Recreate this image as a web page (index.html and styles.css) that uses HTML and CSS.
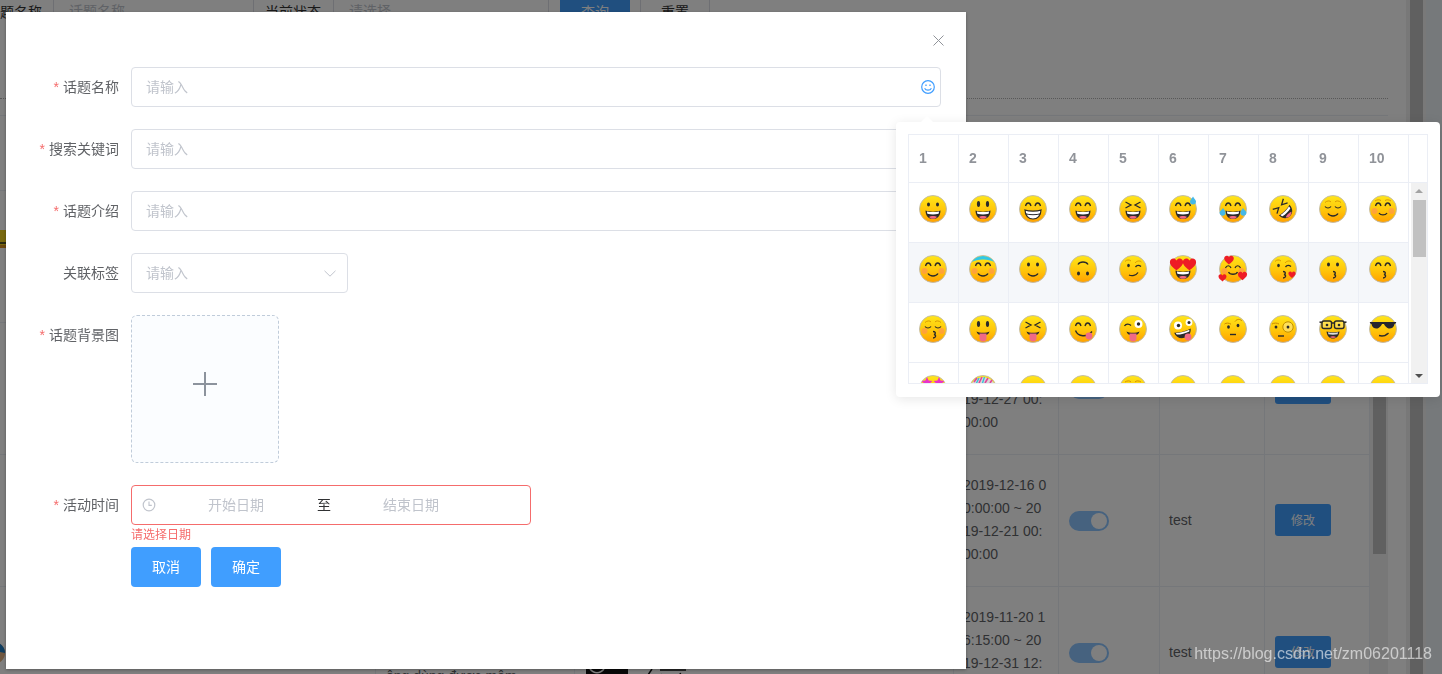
FILE: index.html
```html
<!DOCTYPE html>
<html lang="zh">
<head>
    <meta charset="UTF-8">
    <title>话题管理</title>
    <link rel="stylesheet" href="styles.css">
</head>
<body>
    <!-- shared emoji parts -->
    <svg class="svg-defs" aria-hidden="true">
        <defs>
            <linearGradient id="face-fill" x1="0" y1="0" x2="0" y2="1">
                <stop offset="0" stop-color="#ffe619"/>
                <stop offset="0.55" stop-color="#ffc60a"/>
                <stop offset="1" stop-color="#ffa000"/>
            </linearGradient>
            <circle id="face" cx="14" cy="14" r="13.5" fill="url(#face-fill)" stroke="#bdb9ad" stroke-width="0.9"/>
            <g id="mouth-open">
                <path d="M6.5 15.5C10 17 18 17 21.5 15.5 21.5 20.5 18.5 24 14 24S6.5 20.5 6.5 15.5Z" fill="#2a2a2a"/>
                <path d="M8 16.4C11 17.2 17 17.2 20 16.4 20 17.6 19.8 18.2 19.5 18.8 16 19.6 12 19.6 8.5 18.8 8.2 18.2 8 17.6 8 16.4Z" fill="#fff"/>
                <path d="M10 22C11.5 20.8 16.5 20.8 18 22 16.8 23.4 15.5 23.8 14 23.8S11.2 23.4 10 22Z" fill="#f06a85"/>
            </g>
            <g id="mouth-grin">
                <path d="M6 15C10 16.6 18 16.6 22 15 22 20.5 18.5 24 14 24S6 20.5 6 15Z" fill="#fff" stroke="#2a2a2a" stroke-width="1.2"/>
                <path d="M6.6 18.8C10 20 18 20 21.4 18.8" fill="none" stroke="#2a2a2a" stroke-width="1"/>
            </g>
            <g id="eyes-dot" fill="#2a2a2a">
                <ellipse cx="9.5" cy="9.5" rx="1.5" ry="2"/>
                <ellipse cx="18.5" cy="9.5" rx="1.5" ry="2"/>
            </g>
            <g id="eyes-tall" fill="#2a2a2a">
                <ellipse cx="9.5" cy="9" rx="1.6" ry="3"/>
                <ellipse cx="18.5" cy="9" rx="1.6" ry="3"/>
            </g>
            <path id="eyes-arc" d="M6.5 11C7.5 7 11 7 12 11M16 11C17 7 20.5 7 21.5 11" fill="none" stroke="#2a2a2a" stroke-width="1.3"/>
            <path id="eyes-x" d="M6.5 7L12 10 6.5 13M21.5 7L16 10 21.5 13" fill="none" stroke="#2a2a2a" stroke-width="1.3"/>
            <g id="eyes-closed" fill="none">
                <path d="M6 11.5C7.5 13.5 10.5 13.5 12 11.5M16 11.5C17.5 13.5 20.5 13.5 22 11.5" stroke="#2a2a2a" stroke-width="1.2"/>
                <path d="M6 7.5C8 5.5 11 5.5 12 7M16 7C17 5.5 20 5.5 22 7.5" stroke="#d08a00" stroke-width="0.8"/>
            </g>
            <path id="smile" d="M9 18.5C11 21.8 17 21.8 19 18.5" fill="none" stroke="#2a2a2a" stroke-width="1.4"/>
            <g id="blush" fill="#ff8a60" opacity="0.55">
                <circle cx="5.5" cy="16" r="3"/>
                <circle cx="22.5" cy="16" r="3"/>
            </g>
            <path id="kiss" d="M14 16.5C17 16.5 17 19 15 19.5 17.5 20 17 23 14 23" fill="none" stroke="#2a2a2a" stroke-width="1.3"/>
            <g id="tongue-mouth">
                <path d="M7.5 16.5C10 18.2 18 18.2 20.5 16.5 20 19 17.5 20.5 14 20.5S8 19 7.5 16.5Z" fill="#2a2a2a"/>
                <path d="M10.5 18.5H17.5V23A3.5 3.5 0 0 1 10.5 23Z" fill="#f06a85"/>
            </g>
            <path id="heart" d="M0-1.5C-1-3.5-4-3-4-.5-4 1.5-1.5 3 0 4.5 1.5 3 4 1.5 4-.5 4-3 1-3.5 0-1.5Z" fill="#ee1c25"/>
            <g id="wink-eyes" fill="none" stroke="#2a2a2a">
                <path d="M6 6.5C7.5 4.5 10.5 4.5 12 6M16 8C18 5.5 21 5.5 22.5 7" stroke="#d08a00" stroke-width="0.8"/>
                <ellipse cx="9.5" cy="10.5" rx="1.3" ry="1.7" fill="#2a2a2a" stroke="none"/>
                <path d="M16.5 12C18 10 20 10 22 11.5" stroke-width="1.3"/>
            </g>
        </defs>
    </svg>

    <!-- page behind the dialog -->
    <div class="page">
        <div class="page-main">
            <div class="search-row">
                <label class="search-label">话题名称</label>
                <div class="search-input name-input">话题名称</div>
                <label class="search-label">当前状态</label>
                <div class="search-input status-input">请选择</div>
                <button class="search-btn primary">查询</button>
                <button class="search-btn">重置</button>
            </div>
            <div class="dotted-line"></div>
            <div class="list-wrap">
                <div class="list-body">
                    <div class="list-head"></div>
                    <div class="list-row">
                        <div class="cell"><svg class="sliver" width="6" height="18" viewBox="0 0 6 18"><rect width="6" height="18" fill="#f2d21e"/><rect y="12" width="6" height="2" fill="#552"/><rect y="15" width="6" height="3" fill="#d8901c"/></svg></div>
                        <div class="cell"></div><div class="cell"></div><div class="cell"></div><div class="cell"></div><div class="cell"></div><div class="cell"></div>
                    </div>
                    <div class="list-row">
                        <div class="cell"></div><div class="cell"></div><div class="cell"></div>
                        <div class="cell time-cell">2019-11-30 00:00:00 ~ 2019-12-27 00:00:00</div>
                        <div class="cell"><span class="switch"></span></div>
                        <div class="cell user-cell">test</div>
                        <div class="cell"><button class="edit-btn">修改</button></div>
                    </div>
                    <div class="list-row">
                        <div class="cell"></div><div class="cell"></div><div class="cell"></div>
                        <div class="cell time-cell">2019-12-16 00:00:00 ~ 2019-12-21 00:00:00</div>
                        <div class="cell"><span class="switch"></span></div>
                        <div class="cell user-cell">test</div>
                        <div class="cell"><button class="edit-btn">修改</button></div>
                    </div>
                    <div class="list-row">
                        <div class="cell"><svg class="avatar" width="24" height="24" viewBox="0 0 24 24"><circle cx="12" cy="12" r="11" fill="#e0b080"/><path d="M1 12A11 11 0 0 1 23 12L14 10Z" fill="#1c7ac0"/></svg></div>
                        <div class="cell intro-cell">ông dùng được mâm</div>
                        <div class="cell thumb-cell"><svg width="110" height="100" viewBox="0 0 110 100"><rect width="42" height="100" fill="#111"/><path d="M4 66C8 71 14 71 18 66" fill="none" stroke="#fff" stroke-width="1.5"/><path d="M60 75L66 66M74 67H100M76 71L72 78M94 70L98 78" fill="none" stroke="#111" stroke-width="1.5"/></svg></div>
                        <div class="cell time-cell">2019-11-20 16:15:00 ~ 2019-12-31 12:00:00</div>
                        <div class="cell"><span class="switch"></span></div>
                        <div class="cell user-cell">test</div>
                        <div class="cell"><button class="edit-btn">修改</button></div>
                    </div>
                </div>
                <div class="list-scroll"><div class="list-thumb"></div></div>
            </div>
        </div>
        <div class="page-scroll"><div class="page-thumb"></div></div>
        <div class="page-edge"></div>
    </div>

    <div class="overlay"></div>

    <!-- dialog -->
    <div class="dialog">
        <svg class="close-icon" width="11" height="11" viewBox="0 0 11 11"><path d="M.5.5L10.5 10.5M10.5.5L.5 10.5" stroke="#909399" stroke-width="1" fill="none"/></svg>
        <div class="form">
            <div class="form-item">
                <label class="form-label"><i>*</i>话题名称</label>
                <div class="input-box">
                    <span class="placeholder">请输入</span>
                    <svg class="smile-icon" width="14" height="14" viewBox="0 0 14 14" fill="none" stroke="#409eff"><circle cx="7" cy="7" r="6.3" stroke-width="1.2"/><path d="M3.6 8.2C4.8 10.8 9.2 10.8 10.4 8.2" stroke-width="1.1"/><path d="M5 4.4V6M9 4.4V6" stroke-width="1.3"/></svg>
                </div>
            </div>
            <div class="form-item">
                <label class="form-label"><i>*</i>搜索关键词</label>
                <div class="input-box"><span class="placeholder">请输入</span></div>
            </div>
            <div class="form-item">
                <label class="form-label"><i>*</i>话题介绍</label>
                <div class="input-box"><span class="placeholder">请输入</span></div>
            </div>
            <div class="form-item">
                <label class="form-label">关联标签</label>
                <div class="input-box tag-select">
                    <span class="placeholder">请输入</span>
                    <svg class="chevron" width="12" height="7" viewBox="0 0 12 7"><path d="M.5.8L6 6.2 11.5.8" fill="none" stroke="#c0c4cc" stroke-width="1"/></svg>
                </div>
            </div>
            <div class="form-item">
                <label class="form-label"><i>*</i>话题背景图</label>
                <div class="upload-box">
                    <svg width="24" height="24" viewBox="0 0 24 24"><path d="M12 0V24M0 12H24" stroke="#8c939d" stroke-width="2"/></svg>
                </div>
            </div>
            <div class="form-item date-item">
                <label class="form-label"><i>*</i>活动时间</label>
                <div class="date-field">
                    <div class="date-box">
                        <svg class="clock-icon" width="14" height="14" viewBox="0 0 14 14" fill="none" stroke="#c0c4cc"><circle cx="7" cy="7" r="5.8" stroke-width="1.2"/><path d="M7 3.6V7.4H9.8" stroke-width="1.1"/></svg>
                        <span class="date-text placeholder">开始日期</span>
                        <span class="date-sep">至</span>
                        <span class="date-text placeholder">结束日期</span>
                    </div>
                    <div class="form-error">请选择日期</div>
                </div>
            </div>
            <div class="form-actions">
                <button class="form-btn">取消</button>
                <button class="form-btn">确定</button>
            </div>
        </div>
    </div>

    <!-- emoji picker -->
    <div class="emoji-popover">
        <div class="emoji-arrow"></div>
        <div class="emoji-table">
            <div class="emoji-head">
                <span>1</span><span>2</span><span>3</span><span>4</span><span>5</span><span>6</span><span>7</span><span>8</span><span>9</span><span>10</span><span class="head-gutter"></span>
            </div>
            <div class="emoji-scroller">
                <div class="emoji-rows">
                    <div class="emoji-row">
                        <div class="emoji-cell"><svg class="emoji" viewBox="0 0 28 28"><use href="#face"/><use href="#eyes-dot"/><use href="#mouth-open"/></svg></div>
                        <div class="emoji-cell"><svg class="emoji" viewBox="0 0 28 28"><use href="#face"/><use href="#eyes-tall"/><use href="#mouth-open"/></svg></div>
                        <div class="emoji-cell"><svg class="emoji" viewBox="0 0 28 28"><use href="#face"/><use href="#eyes-arc"/><use href="#mouth-grin"/></svg></div>
                        <div class="emoji-cell"><svg class="emoji" viewBox="0 0 28 28"><use href="#face"/><use href="#eyes-arc"/><use href="#mouth-open"/></svg></div>
                        <div class="emoji-cell"><svg class="emoji" viewBox="0 0 28 28"><use href="#face"/><use href="#eyes-x"/><use href="#mouth-open"/></svg></div>
                        <div class="emoji-cell"><svg class="emoji" viewBox="0 0 28 28"><use href="#face"/><use href="#eyes-arc"/><use href="#mouth-open"/><path d="M24 1.5C25.5 4 27 5 27 6.5A3 3 0 0 1 21 6.5C21 5 22.5 4 24 1.5Z" fill="#45b8e8"/></svg></div>
                        <div class="emoji-cell"><svg class="emoji" viewBox="0 0 28 28"><use href="#face"/><use href="#eyes-arc"/><use href="#mouth-open"/><path d="M4 13C5.5 15 7 17 6.5 19A3.2 3.2 0 0 1 .5 18C.5 16.5 2.5 15 4 13ZM24 13C25.5 15 27.5 16.5 27.5 18A3.2 3.2 0 0 1 21.5 19C21 17 22.5 15 24 13Z" fill="#45b8e8"/></svg></div>
                        <div class="emoji-cell"><svg class="emoji" viewBox="0 0 28 28"><use href="#face"/><g transform="rotate(-45 14 14)"><use href="#eyes-x"/><use href="#mouth-open"/></g></svg></div>
                        <div class="emoji-cell"><svg class="emoji" viewBox="0 0 28 28"><use href="#face"/><use href="#eyes-closed"/><use href="#smile"/></svg></div>
                        <div class="emoji-cell"><svg class="emoji" viewBox="0 0 28 28"><use href="#face"/><use href="#blush"/><use href="#eyes-arc"/><path d="M10 18C11.5 20.5 16.5 20.5 18 18" fill="none" stroke="#2a2a2a" stroke-width="1.3"/><path d="M6 6C8 4.5 10.5 4.5 12 5.5M16 5.5C17.5 4.5 20 4.5 22 6" fill="none" stroke="#d08a00" stroke-width="0.8"/></svg></div>
                    </div>
                    <div class="emoji-row hovered">
                        <div class="emoji-cell"><svg class="emoji" viewBox="0 0 28 28"><use href="#face"/><use href="#blush"/><use href="#eyes-arc"/><use href="#smile"/></svg></div>
                        <div class="emoji-cell"><svg class="emoji" viewBox="0 0 28 28"><use href="#face"/><path d="M2.8 7A13.5 13.5 0 0 1 25.2 7C20 3.6 8 3.6 2.8 7Z" fill="#30c8e8"/><use href="#blush"/><use href="#eyes-arc"/><use href="#smile"/></svg></div>
                        <div class="emoji-cell"><svg class="emoji" viewBox="0 0 28 28"><use href="#face"/><use href="#eyes-dot"/><use href="#smile"/></svg></div>
                        <div class="emoji-cell"><svg class="emoji" viewBox="0 0 28 28"><use href="#face"/><g transform="rotate(180 14 14)"><use href="#eyes-dot"/><use href="#smile"/></g></svg></div>
                        <div class="emoji-cell"><svg class="emoji" viewBox="0 0 28 28"><use href="#face"/><use href="#wink-eyes"/><path d="M10 20C13 21.5 17 20.5 19 17.5" fill="none" stroke="#2a2a2a" stroke-width="1.3"/></svg></div>
                        <div class="emoji-cell"><svg class="emoji" viewBox="0 0 28 28"><use href="#face"/><use href="#mouth-open"/><use href="#heart" transform="translate(7.5 8) scale(1.65)"/><use href="#heart" transform="translate(20.5 8) scale(1.65)"/></svg></div>
                        <div class="emoji-cell"><svg class="emoji" viewBox="0 0 28 28"><use href="#face"/><use href="#blush"/><path d="M6.5 13C7.5 10 11 10 12 13M16 13C17 10 20.5 10 21.5 13" fill="none" stroke="#2a2a2a" stroke-width="1.2"/><path d="M9.5 17C11 20 17 20 18.5 17" fill="none" stroke="#2a2a2a" stroke-width="1.3"/><use href="#heart" transform="translate(10 4) scale(1.2)"/><use href="#heart" transform="translate(3.5 22)"/><use href="#heart" transform="translate(23.5 20) scale(1.15)"/></svg></div>
                        <div class="emoji-cell"><svg class="emoji" viewBox="0 0 28 28"><use href="#face"/><use href="#wink-eyes"/><use href="#kiss"/><use href="#heart" transform="translate(23 19) scale(.9)"/></svg></div>
                        <div class="emoji-cell"><svg class="emoji" viewBox="0 0 28 28"><use href="#face"/><use href="#eyes-dot"/><use href="#kiss"/></svg></div>
                        <div class="emoji-cell"><svg class="emoji" viewBox="0 0 28 28"><use href="#face"/><use href="#eyes-arc"/><use href="#kiss"/></svg></div>
                    </div>
                    <div class="emoji-row">
                        <div class="emoji-cell"><svg class="emoji" viewBox="0 0 28 28"><use href="#face"/><use href="#blush"/><use href="#eyes-closed"/><use href="#kiss"/></svg></div>
                        <div class="emoji-cell"><svg class="emoji" viewBox="0 0 28 28"><use href="#face"/><use href="#eyes-tall"/><use href="#tongue-mouth"/></svg></div>
                        <div class="emoji-cell"><svg class="emoji" viewBox="0 0 28 28"><use href="#face"/><use href="#eyes-x"/><use href="#tongue-mouth"/></svg></div>
                        <div class="emoji-cell"><svg class="emoji" viewBox="0 0 28 28"><use href="#face"/><use href="#eyes-arc"/><path d="M6.5 15.5C9 22 18 22.5 23 16.5" fill="none" stroke="#2a2a2a" stroke-width="1.4"/><circle cx="20" cy="21" r="3.4" fill="#f06a85"/></svg></div>
                        <div class="emoji-cell"><svg class="emoji" viewBox="0 0 28 28"><use href="#face"/><path d="M5.5 11C7 8.5 10 8.5 12 10.5" fill="none" stroke="#2a2a2a" stroke-width="1.3"/><circle cx="19.5" cy="9" r="4" fill="#fff"/><circle cx="19.5" cy="9" r="1.7" fill="#2a2a2a"/><use href="#tongue-mouth"/></svg></div>
                        <div class="emoji-cell"><svg class="emoji" viewBox="0 0 28 28"><use href="#face"/><circle cx="9" cy="10.5" r="4" fill="#fff"/><circle cx="9.5" cy="10.5" r="1.7" fill="#2a2a2a"/><circle cx="20" cy="7.5" r="3.4" fill="#fff"/><circle cx="20" cy="7.5" r="1.5" fill="#2a2a2a"/><g transform="rotate(-14 14 18)"><path d="M5.5 15.5C10 17 18 17 22.5 15.5 22 20 18.5 23 14 23S6 20 5.5 15.5Z" fill="#2a2a2a"/><path d="M7 16.3C11 17.2 17 17.2 21 16.3L20.5 18C16 19 12 19 7.5 18Z" fill="#fff"/></g><circle cx="19" cy="22" r="3.4" fill="#f06a85"/></svg></div>
                        <div class="emoji-cell"><svg class="emoji" viewBox="0 0 28 28"><use href="#face"/><path d="M5.5 9C7 7.8 10 7.8 12 9.2M16 6.5C18 3.8 21 3.8 23 6" fill="none" stroke="#c98a00" stroke-width="1"/><ellipse cx="9.5" cy="12" rx="1.4" ry="1.7" fill="#2a2a2a"/><ellipse cx="19" cy="10.5" rx="1.4" ry="1.7" fill="#2a2a2a"/><path d="M11 19.5H17" stroke="#2a2a2a" stroke-width="1.4"/></svg></div>
                        <div class="emoji-cell"><svg class="emoji" viewBox="0 0 28 28"><use href="#face"/><path d="M3 9C5 7.8 8 7.8 10 9" fill="none" stroke="#c98a00" stroke-width="1"/><ellipse cx="7" cy="12" rx="1.4" ry="1.6" fill="#2a2a2a"/><circle cx="19" cy="12" r="5.2" fill="#ffe98a" fill-opacity="0.6" stroke="#c09000" stroke-width="1"/><ellipse cx="19" cy="12" rx="1.4" ry="1.6" fill="#2a2a2a"/><path d="M9 21H15" stroke="#2a2a2a" stroke-width="1.4"/></svg></div>
                        <div class="emoji-cell"><svg class="emoji" viewBox="0 0 28 28"><use href="#face"/><g fill="#ffffff" fill-opacity="0.25" stroke="#2a2a2a" stroke-width="1.4"><rect x="3" y="6" width="9.5" height="7.5" rx="2"/><rect x="15.5" y="6" width="9.5" height="7.5" rx="2"/></g><path d="M0.5 7L3 7.5M12.5 8H15.5M25 7.5L27.5 7" stroke="#2a2a2a" stroke-width="1.4"/><circle cx="8" cy="10" r="1.3" fill="#2a2a2a"/><circle cx="20" cy="10" r="1.3" fill="#2a2a2a"/><path d="M7.5 16.5C10 17.5 18 17.5 20.5 16.5 20 21 17.5 23.5 14 23.5S8 21 7.5 16.5Z" fill="#2a2a2a"/><path d="M9 17.3C12 18 16 18 19 17.3L18.6 19.3C16 19.8 12 19.8 9.4 19.3Z" fill="#ddd"/><path d="M11 22C12 21 16 21 17 22 16 23.2 12 23.2 11 22Z" fill="#f06a85"/></svg></div>
                        <div class="emoji-cell"><svg class="emoji" viewBox="0 0 28 28"><use href="#face"/><path d="M.8 7H27.2C27.2 8.5 26 8.8 25.5 9 25 13 21 14.5 18.5 13 16.5 12 15.5 10 15 9H13C12.5 10 11.5 12 9.5 13 7 14.5 3 13 2.5 9 2 8.8.8 8.5.8 7Z" fill="#26262e"/><path d="M10 20.5C13.5 21.5 17 20.5 19.5 18" fill="none" stroke="#2a2a2a" stroke-width="1.4"/></svg></div>
                    </div>
                    <div class="emoji-row">
                        <div class="emoji-cell"><svg class="emoji" viewBox="0 0 28 28"><use href="#face"/><path d="M8 2L9.6 5.4 13.4 6 10.6 8.6 11.4 12 8 10.2 4.6 12 5.4 8.6 2.6 6 6.4 5.4ZM20 2L21.6 5.4 25.4 6 22.6 8.6 23.4 12 20 10.2 16.6 12 17.4 8.6 14.6 6 18.4 5.4Z" fill="#e832c8"/></svg></div>
                        <div class="emoji-cell"><svg class="emoji" viewBox="0 0 28 28"><use href="#face"/><path d="M3 8A13.5 13.5 0 0 1 25 8C20 10 8 10 3 8Z" fill="#d8d8d8"/><path d="M5 7L8 3M10 8L13 2M16 8L19 3M21 8L23 5" stroke="#e0469a" stroke-width="1.6"/><path d="M7.5 8L10 3M13.5 8L15.5 2" stroke="#38c0d8" stroke-width="1.4"/></svg></div>
                        <div class="emoji-cell"><svg class="emoji" viewBox="0 0 28 28"><use href="#face"/></svg></div>
                        <div class="emoji-cell"><svg class="emoji" viewBox="0 0 28 28"><use href="#face"/></svg></div>
                        <div class="emoji-cell"><svg class="emoji" viewBox="0 0 28 28"><use href="#face"/><path d="M6 7C8 5.5 11 5.5 12 7M16 7C17 5.5 20 5.5 22 7" fill="none" stroke="#d08a00" stroke-width="0.9"/></svg></div>
                        <div class="emoji-cell"><svg class="emoji" viewBox="0 0 28 28"><use href="#face"/></svg></div>
                        <div class="emoji-cell"><svg class="emoji" viewBox="0 0 28 28"><use href="#face"/></svg></div>
                        <div class="emoji-cell"><svg class="emoji" viewBox="0 0 28 28"><use href="#face"/></svg></div>
                        <div class="emoji-cell"><svg class="emoji" viewBox="0 0 28 28"><use href="#face"/></svg></div>
                        <div class="emoji-cell"><svg class="emoji" viewBox="0 0 28 28"><use href="#face"/></svg></div>
                    </div>
                </div>
                <div class="emoji-scrollbar">
                    <span class="scroll-up"></span>
                    <div class="scroll-thumb"></div>
                    <span class="scroll-down"></span>
                </div>
            </div>
        </div>
    </div>

    <div class="watermark">https://blog.csdn.net/zm06201118</div>
</body>
</html>
```

FILE: styles.css
```css
html, body {
    margin: 0;
    padding: 0;
    height: 100%;
    overflow: hidden;
}
body {
    font-family: "Liberation Sans", "Noto Sans CJK SC", sans-serif;
    font-size: 14px;
    color: #606266;
    background-color: #fff;
}
button {
    font-family: inherit;
}
.svg-defs {
    position: absolute;
    width: 0;
    height: 0;
}

/* page behind the dialog */
.page {
    display: flex;
    height: 674px;
    overflow: hidden;
}
.page-main {
    width: 1406px;
    flex-shrink: 0;
}
.search-row {
    display: flex;
    align-items: center;
    height: 40px;
    margin: -9px 0 0 -14px;
}
.search-label {
    width: 56px;
    color: #333;
    white-space: nowrap;
}
.search-input {
    box-sizing: border-box;
    height: 40px;
    line-height: 38px;
    padding-left: 15px;
    border: 1px solid #dcdfe6;
    border-radius: 4px;
    color: #c0c4cc;
}
.name-input {
    width: 201px;
    margin: 0 11px 0 11px;
}
.status-input {
    width: 216px;
    margin: 0 11px 0 12px;
}
.search-btn {
    width: 70px;
    height: 40px;
    margin-right: 10px;
    border: 1px solid #dcdfe6;
    border-radius: 4px;
    background-color: #fff;
    color: #333;
    font-size: 14px;
    padding: 0;
}
.search-btn.primary {
    background-color: #409eff;
    border-color: #409eff;
    color: #fff;
}
.dotted-line {
    margin: 67px 18px 0 0;
    border-top: 1px dotted #b0b0b0;
}
.list-wrap {
    display: flex;
    margin-top: 16px;
    margin-right: 18px;
    border-top: 1px solid #ebeef5;
}
.list-body {
    width: 1370px;
    flex-shrink: 0;
}
.list-head {
    height: 74px;
    border-bottom: 1px solid #ebeef5;
}
.list-row {
    display: grid;
    grid-template-columns: 376px 199px 379px 105px 101px 105px 105px;
    grid-template-rows: 131px;
    height: 132px;
    box-sizing: border-box;
    border-bottom: 1px solid #ebeef5;
}
.cell {
    box-sizing: border-box;
    display: flex;
    align-items: center;
    padding: 0 10px;
    border-right: 1px solid #ebeef5;
    overflow: hidden;
}
.time-cell {
    display: block;
    padding: 19px 11px 0 9px;
    line-height: 23px;
    word-break: break-all;
}
.user-cell {
    padding-left: 9px;
    padding-bottom: 2px;
}
.intro-cell {
    align-items: flex-start;
    padding-top: 81px;
    white-space: nowrap;
}
.thumb-cell {
    padding: 0 0 0 11px;
    align-items: flex-start;
}
.thumb-cell svg {
    flex-shrink: 0;
    margin-top: 16px;
}
.sliver {
    margin: 0 0 36px -10px;
    flex-shrink: 0;
}
.avatar {
    margin-left: -28px;
    flex-shrink: 0;
}
.switch {
    display: block;
    position: relative;
    width: 40px;
    height: 20px;
    border-radius: 10px;
    background-color: #409eff;
    opacity: 0.6;
}
.switch::after {
    content: "";
    position: absolute;
    top: 2px;
    right: 2px;
    width: 16px;
    height: 16px;
    border-radius: 50%;
    background-color: #fff;
}
.edit-btn {
    width: 56px;
    height: 32px;
    margin-bottom: 2px;
    padding: 0;
    border: none;
    border-radius: 3px;
    background-color: #409eff;
    color: #fff;
    font-size: 12px;
}
.list-scroll {
    width: 18px;
    margin-top: 75px;
    padding: 25px 2px 0 3px;
    box-sizing: border-box;
    background-color: #f1f1f1;
    height: 560px;
}
.list-thumb {
    height: 338px;
    background-color: #c1c1c1;
}
.page-scroll {
    width: 17px;
    padding-left: 4px;
    box-sizing: border-box;
    background-color: #f1f1f1;
}
.page-thumb {
    height: 100%;
    background-color: #c1c1c1;
}
.page-edge {
    flex: 1;
    background-color: #edf2f7;
    border-left: 3px solid #f3f3f3;
}
.overlay {
    position: fixed;
    left: 0;
    top: 0;
    right: 0;
    bottom: 0;
    background-color: rgba(0, 0, 0, 0.5);
}

/* dialog */
.dialog {
    position: absolute;
    left: 6px;
    top: 12px;
    width: 960px;
    height: 657px;
    box-sizing: border-box;
    padding-top: 55px;
    background-color: #fff;
    box-shadow: 0 1px 3px rgba(0, 0, 0, 0.3);
}
.close-icon {
    position: absolute;
    top: 23px;
    right: 22px;
}
.form-item {
    display: flex;
    margin-bottom: 22px;
}
.form-label {
    box-sizing: border-box;
    width: 125px;
    padding-right: 12px;
    line-height: 40px;
    text-align: right;
    flex-shrink: 0;
}
.form-label i {
    font-style: normal;
    color: #f56c6c;
    margin-right: 4px;
}
.input-box {
    box-sizing: border-box;
    display: flex;
    align-items: center;
    justify-content: space-between;
    width: 810px;
    height: 40px;
    padding: 0 5px 0 14px;
    border: 1px solid #dcdfe6;
    border-radius: 4px;
}
.placeholder {
    color: #c0c4cc;
    margin-bottom: 2px;
}
.tag-select {
    width: 217px;
    padding-right: 11px;
}
.upload-box {
    box-sizing: border-box;
    display: flex;
    align-items: center;
    justify-content: center;
    width: 148px;
    height: 148px;
    padding-bottom: 10px;
    border: 1px dashed #c0ccda;
    border-radius: 6px;
    background-color: #fbfdff;
}
.date-item {
    margin-bottom: 0;
}
.date-box {
    box-sizing: border-box;
    display: flex;
    align-items: center;
    width: 400px;
    height: 40px;
    padding-left: 10px;
    border: 1px solid #f56c6c;
    border-radius: 4px;
}
.clock-icon {
    width: 16px;
    flex-shrink: 0;
    margin-left: -1px;
    margin-right: 1px;
}
.date-text {
    width: 156px;
    text-align: center;
}
.date-sep {
    box-sizing: border-box;
    width: 19px;
    padding-left: 1px;
    margin-bottom: 2px;
    text-align: center;
    color: #303133;
}
.form-error {
    height: 22px;
    box-sizing: border-box;
    padding-top: 4px;
    font-size: 12px;
    line-height: 12px;
    color: #f56c6c;
}
.form-actions {
    display: flex;
    gap: 10px;
    padding-left: 125px;
}
.form-btn {
    width: 70px;
    height: 40px;
    padding: 0 0 2px;
    border: none;
    border-radius: 4px;
    background-color: #409eff;
    color: #fff;
    font-size: 14px;
}

/* emoji picker */
.emoji-popover {
    position: absolute;
    left: 896px;
    top: 122px;
    width: 544px;
    height: 275px;
    box-sizing: border-box;
    padding: 12px;
    background-color: #fff;
    border-radius: 4px;
    box-shadow: 0 2px 12px rgba(0, 0, 0, 0.1);
}
.emoji-arrow {
    position: absolute;
    left: 25px;
    top: -6px;
    width: 0;
    height: 0;
    border-left: 6px solid transparent;
    border-right: 6px solid transparent;
    border-bottom: 6px solid #fff;
}
.emoji-table {
    width: 520px;
    box-sizing: border-box;
    border: 1px solid #ebeef5;
}
.emoji-head {
    display: flex;
    height: 48px;
    box-sizing: border-box;
    border-bottom: 1px solid #ebeef5;
}
.emoji-head span {
    box-sizing: border-box;
    width: 50px;
    padding-left: 10px;
    line-height: 47px;
    font-weight: bold;
    color: #909399;
    border-right: 1px solid #ebeef5;
}
.emoji-head .head-gutter {
    flex: 1;
    border-right: none;
}
.emoji-scroller {
    display: flex;
    height: 200px;
    overflow: hidden;
}
.emoji-rows {
    width: 500px;
    flex-shrink: 0;
}
.emoji-row {
    display: flex;
    height: 60px;
    box-sizing: border-box;
    border-bottom: 1px solid #ebeef5;
}
.emoji-row.hovered {
    background-color: #f5f7fa;
}
.emoji-cell {
    box-sizing: border-box;
    width: 50px;
    padding: 12px 0 0 10px;
    border-right: 1px solid #ebeef5;
}
.emoji {
    display: block;
    width: 28px;
    height: 28px;
    overflow: visible;
}
.emoji-scrollbar {
    position: relative;
    flex: 1;
    margin-left: 2px;
    background-color: #f1f1f1;
}
.scroll-thumb {
    position: absolute;
    left: 2px;
    right: 1px;
    top: 17px;
    height: 57px;
    background-color: #c1c1c1;
}
.scroll-up,
.scroll-down {
    position: absolute;
    left: 4px;
    width: 0;
    height: 0;
    border-left: 4px solid transparent;
    border-right: 4px solid transparent;
}
.scroll-up {
    top: 6px;
    border-bottom: 4px solid #a3a3a3;
}
.scroll-down {
    bottom: 5px;
    border-top: 4px solid #505050;
}
.watermark {
    position: absolute;
    right: 10px;
    top: 644px;
    font-size: 16px;
    line-height: 20px;
    color: rgba(255, 255, 255, 0.6);
}
```
